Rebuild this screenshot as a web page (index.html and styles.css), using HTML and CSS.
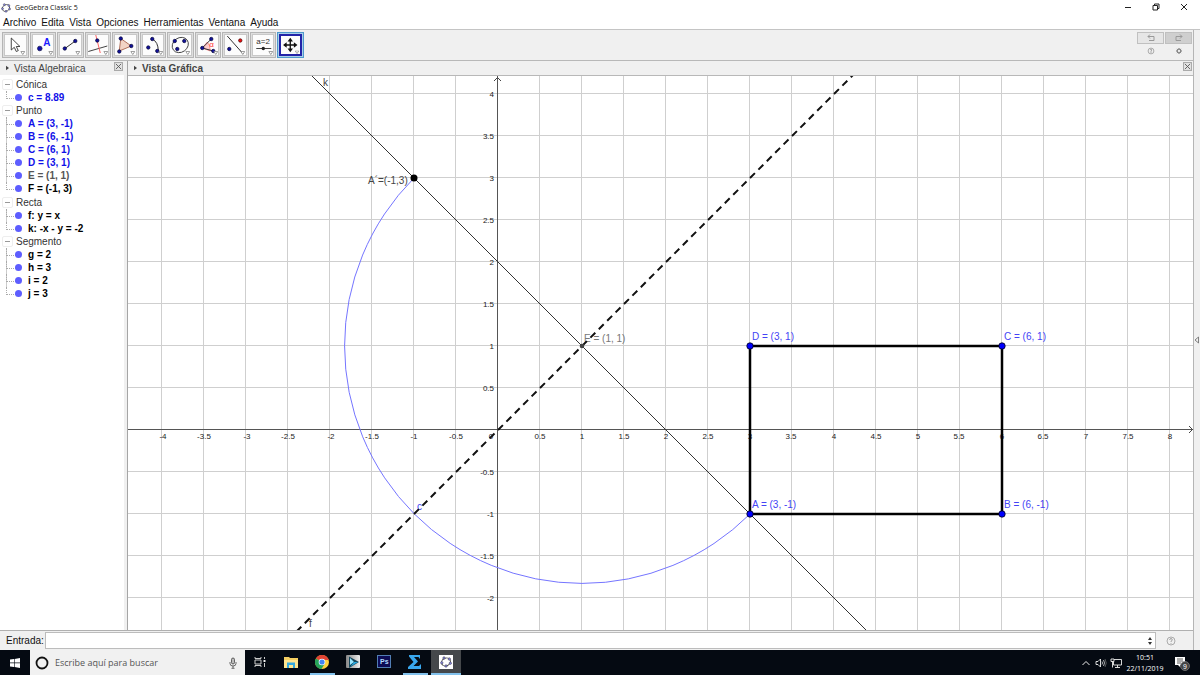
FILE: index.html
```html
<!DOCTYPE html>
<html lang="es">
<head>
<meta charset="utf-8">
<title>GeoGebra Classic 5</title>
<link rel="stylesheet" href="styles.css">
</head>
<body>
<svg class="defs" aria-hidden="true">
  <symbol id="logo" viewBox="0 0 12 12">
    <ellipse cx="6" cy="6" rx="4.6" ry="3.8" transform="rotate(-25 6 6)" fill="none" stroke="#555" stroke-width="1"/>
    <g fill="#8c8cee" stroke="#333" stroke-width=".5"><circle cx="4" cy="2" r="1.2"/><circle cx="9.3" cy="3" r="1.2"/><circle cx="10.3" cy="7.2" r="1.2"/><circle cx="6" cy="10" r="1.2"/><circle cx="1.8" cy="6.8" r="1.2"/></g>
  </symbol>
  <symbol id="more" viewBox="0 0 5 4"><path d="M.5.5h4l-2 3z" fill="#fff" stroke="#777" stroke-width=".7"/></symbol>
</svg>

<header class="titlebar">
  <svg class="app-logo" aria-hidden="true"><use href="#logo"/></svg>
  <span class="app-title">GeoGebra Classic 5</span>
  <div class="window-controls">
    <button aria-label="Minimizar"><svg viewBox="0 0 10 10"><path d="M2 5.500h6" stroke="#222"/></svg></button>
    <button aria-label="Restaurar"><svg viewBox="0 0 10 10"><path d="M2 3.500h4.500v4.500h-4.500zM3.500 3.500v-1.500h4.500v4.500h-1.500" fill="none" stroke="#222"/></svg></button>
    <button aria-label="Cerrar"><svg viewBox="0 0 10 10"><path d="M2 2l6 6M8 2l-6 6" stroke="#222"/></svg></button>
  </div>
</header>

<nav class="menubar">
  <button>Archivo</button><button>Edita</button><button>Vista</button><button>Opciones</button><button>Herramientas</button><button>Ventana</button><button>Ayuda</button>
</nav>

<div class="application">
  <div class="main">
    <div class="toolbar">
      <div class="tools">
        <button class="tool" aria-label="Elige y Mueve"><svg viewBox="0 0 20 20"><path d="M6 3v12l3-2.700 2 4.200 2-.9-2-4.100h3.700z" fill="#fff" stroke="#333" stroke-width=".9"/><use href="#more" x="15" y="16" width="5" height="4"/></svg></button>
        <button class="tool" aria-label="Punto"><svg viewBox="0 0 20 20"><circle cx="6.500" cy="13.500" r="2.300" fill="#11a" stroke="#114" stroke-width=".7"/><text x="10" y="11" font-size="10" font-weight="bold" fill="#1a1aff">A</text><use href="#more" x="15" y="16" width="5" height="4"/></svg></button>
        <button class="tool" aria-label="Recta"><svg viewBox="0 0 20 20"><path d="M4 14L15 6" stroke="#333"/><g class="dots"><circle cx="4.500" cy="13.500" r="1.700"/><circle cx="15" cy="6" r="1.700"/></g><use href="#more" x="15" y="16" width="5" height="4"/></svg></button>
        <button class="tool" aria-label="Perpendicular"><svg viewBox="0 0 20 20"><path d="M0 16.500L19 11" stroke="#444"/><path d="M7.500 0L12 18" stroke="#f66"/><circle class="dots" cx="9" cy="5.500" r="1.700"/><use href="#more" x="15" y="16" width="5" height="4"/></svg></button>
        <button class="tool" aria-label="Polígono"><svg viewBox="0 0 20 20"><path d="M5.500 3.500L16 11 4 16z" fill="#f2d4c5" stroke="#b0705a"/><g class="dots"><circle cx="5.500" cy="3.500" r="1.700"/><circle cx="16" cy="11" r="1.700"/><circle cx="4" cy="16.500" r="1.700"/></g><use href="#more" x="15" y="16" width="5" height="4"/></svg></button>
        <button class="tool" aria-label="Arco"><svg viewBox="0 0 20 20"><path d="M9 4q6 3 6 12" fill="none" stroke="#333"/><g class="dots"><circle cx="9" cy="4" r="1.700"/><circle cx="5" cy="12.500" r="1.700"/><circle cx="14" cy="16" r="1.700"/></g><use href="#more" x="15" y="16" width="5" height="4"/></svg></button>
        <button class="tool" aria-label="Elipse"><svg viewBox="0 0 20 20"><ellipse cx="10" cy="10" rx="8.500" ry="7.200" transform="rotate(-35 10 10)" fill="none" stroke="#444" stroke-width=".9"/><g class="dots"><circle cx="4.500" cy="6" r="1.700"/><circle cx="14" cy="6" r="1.700"/><circle cx="7" cy="14" r="1.700"/></g><use href="#more" x="15" y="16" width="5" height="4"/></svg></button>
        <button class="tool" aria-label="Ángulo"><svg viewBox="0 0 20 20"><path d="M4 13l5-6q3 3 3 9z" fill="#fcc" stroke="#f77" stroke-width=".7"/><path d="M13 4L4 13l11 3" fill="none" stroke="#333"/><text x="11" y="12" font-size="8" fill="#f33">α</text><g class="dots"><circle cx="13" cy="4" r="1.700"/><circle cx="4" cy="13" r="1.700"/><circle cx="15" cy="16" r="1.700"/></g><use href="#more" x="15" y="16" width="5" height="4"/></svg></button>
        <button class="tool" aria-label="Simetría"><svg viewBox="0 0 20 20"><path d="M2 1L18 19" stroke="#333"/><circle class="dots" cx="4" cy="14" r="1.700"/><circle cx="15" cy="5.500" r="1.700" fill="#e11" stroke="#400" stroke-width=".7"/><use href="#more" x="15" y="16" width="5" height="4"/></svg></button>
        <button class="tool" aria-label="Deslizador"><svg viewBox="0 0 20 20"><text x="3" y="9" font-size="8" fill="#333">a=2</text><path d="M3 13.500h15" stroke="#444"/><circle cx="10" cy="13.500" r="1.700" fill="#222"/><use href="#more" x="15" y="16" width="5" height="4"/></svg></button>
        <button class="tool selected" aria-label="Desplaza Vista Gráfica" aria-pressed="true"><svg viewBox="0 0 20 20"><path d="M10 5v10M5 10h10" stroke="#111" stroke-width="1.500"/><path d="M10 2l3 4H7zM10 18l3-4H7zM2 10l4-3v6zM18 10l-4-3v6z" fill="#111"/><use href="#more" x="15" y="16" width="5" height="4"/></svg></button>
      </div>
      <div class="side-tools">
        <button class="history" aria-label="Deshacer"><svg viewBox="0 0 12 10"><path d="M3 3.500h6v4H4M5 1.500l-2 2 2 2" fill="none" stroke="#999"/></svg></button>
        <button class="history redo" aria-label="Rehacer"><svg viewBox="0 0 12 10"><path d="M9 3.500H3v4h5M7 1.500l2 2-2 2" fill="none" stroke="#999"/></svg></button>
        <button aria-label="Ayuda"><svg viewBox="0 0 12 10"><circle cx="6" cy="5" r="2.900" fill="none" stroke="#999" stroke-width=".8"/><path d="M5 4q1-1.500 2 0L6 5v2" fill="none" stroke="#999" stroke-width=".8"/></svg></button>
        <button aria-label="Preferencias"><svg viewBox="0 0 12 10"><circle cx="6" cy="5" r="1.800" fill="none" stroke="#888" stroke-width="1.300"/><path d="M6 2v1.200M6 6.800V8M3 5h1.200M7.800 5H9M3.900 2.900l.9.900M7.200 6.200l.9.900M8.100 2.900l-.9.900M4.800 6.200l-.9.900" stroke="#888"/></svg></button>
      </div>
    </div>

    <div class="views">
      <section class="algebra">
        <div class="view-head"><svg class="expander" viewBox="0 0 4 6"><path d="M0 0l4 3-4 3z"/></svg><h2>Vista Algebraica</h2><button class="close" aria-label="Cerrar Vista Algebraica"><svg viewBox="0 0 8 8"><path d="M1 1l6 6M7 1L1 7" stroke="#555"/></svg></button></div>
        <ul class="tree">
          <li>Cónica
            <ul><li class="free">c = 8.89</li></ul></li>
          <li>Punto
            <ul><li class="free">A = (3, -1)</li><li class="free">B = (6, -1)</li><li class="free">C = (6, 1)</li><li class="free">D = (3, 1)</li><li class="dim">E = (1, 1)</li><li>F = (-1, 3)</li></ul></li>
          <li class="spaced">Recta
            <ul><li>f: y = x</li><li>k: -x - y = -2</li></ul></li>
          <li>Segmento
            <ul><li>g = 2</li><li>h = 3</li><li>i = 2</li><li>j = 3</li></ul></li>
        </ul>
      </section>

      <section class="graphics">
        <div class="view-head"><svg class="expander" viewBox="0 0 4 6"><path d="M0 0l4 3-4 3z"/></svg><h2>Vista Gráfica</h2><button class="close" aria-label="Cerrar Vista Gráfica"><svg viewBox="0 0 8 8"><path d="M1 1l6 6M7 1L1 7" stroke="#555"/></svg></button></div>
        <div class="canvas">
        <svg class="plot" role="img" aria-label="Rectángulo, rectas y arco en el plano">
          <defs><pattern id="grid" x="-1" y="-1" width="42" height="42" patternUnits="userSpaceOnUse"><path d="M0 0h42v1H1v41H0z" fill="#cfcfcf"/></pattern></defs>
          <!-- origin of the plane; one unit is 84px -->
          <g transform="translate(370 354)">
            <rect x="-2000" y="-2000" width="6000" height="4000" fill="url(#grid)"/>
            <path class="axis" d="M-2000-1h6000v1h-6000zM-1-2000h1v4000h-1z"/>
            <path d="M-4-349l3.500-3.500 3.500 3.500" fill="none" stroke="#444"/>
            <g class="ticks">
              <g class="x-ticks"><text x="-335" y="9">-4</text><text x="-294" y="9">-3.5</text><text x="-251" y="9">-3</text><text x="-210" y="9">-2.5</text><text x="-167" y="9">-2</text><text x="-126" y="9">-1.5</text><text x="-84" y="9">-1</text><text x="-42" y="9">-0.5</text><text x="-7" y="9">0</text><text x="42" y="9">0.5</text><text x="84" y="9">1</text><text x="126" y="9">1.5</text><text x="168" y="9">2</text><text x="210" y="9">2.5</text><text x="252" y="9">3</text><text x="293" y="9">3.5</text><text x="336" y="9">4</text><text x="378" y="9">4.5</text><text x="420" y="9">5</text><text x="461" y="9">5.5</text><text x="504" y="9">6</text><text x="545" y="9">6.5</text><text x="588" y="9">7</text><text x="630" y="9">7.5</text><text x="672" y="9">8</text></g>
              <g class="y-ticks"><text x="-4" y="-333">4</text><text x="-4" y="-291">3.5</text><text x="-4" y="-249">3</text><text x="-4" y="-207">2.5</text><text x="-4" y="-165">2</text><text x="-4" y="-123">1.5</text><text x="-4" y="-81">1</text><text x="-4" y="-39">0.5</text><text x="-4" y="45">-0.5</text><text x="-4" y="87">-1</text><text x="-4" y="129">-1.5</text><text x="-4" y="171">-2</text></g>
            </g>
            <g class="labels">
              <text x="-130" y="-246">A´=(-1,3)</text><text x="-175" y="-344">k</text><text x="-189" y="197">f</text><text x="86" y="-88" class="dim">E = (1, 1)</text>
              <g class="free"><text x="254" y="-90">D = (3, 1)</text><text x="506" y="-90">C = (6, 1)</text><text x="254" y="78">A = (3, -1)</text><text x="506" y="78">B = (6, -1)</text><text x="-81" y="80">c</text></g>
            </g>
            <path d="M-84-252A237.588 237.588 0 0 0 252 84" fill="none" stroke="#7575ff"/>
            <path d="M-840-1008L1008 840" stroke="#333"/>
            <path d="M-840 840L840-840" pathLength="2400" stroke="#111" stroke-width="2" stroke-dasharray="7 5"/>
            <rect x="252" y="-84" width="252" height="168" fill="none" stroke="#000" stroke-width="2.500"/>
            <circle cx="-84" cy="-252" r="3.500"/><circle cx="84" cy="-84" r="2.300" fill="#444"/>
            <g fill="#00f" stroke="#001" stroke-width=".8"><circle cx="252" cy="-84" r="3.200"/><circle cx="504" cy="-84" r="3.200"/><circle cx="252" cy="84" r="3.200"/><circle cx="504" cy="84" r="3.200"/></g>
          </g>
          <svg x="100%" overflow="visible"><path d="M-4 350l3.500 3.500-3.500 3.500" fill="none" stroke="#444"/></svg>
        </svg>
        </div>
      </section>
    </div>

    <form class="entry">
      <label for="entrada">Entrada:</label>
      <div class="entry-box"><input id="entrada" type="text"><svg viewBox="0 0 6 8"><path d="M3 0l2 3H1zM3 8l2-3H1z" fill="#333"/></svg></div>
      <button type="button" aria-label="Ayuda de Entrada"><svg viewBox="0 0 10 10"><circle cx="5" cy="5" r="4" fill="none" stroke="#999" stroke-width=".8"/><path d="M3.700 4q0-1.500 1.300-1.500T6.300 4Q5 5 5 6M5 7v.8" fill="none" stroke="#999" stroke-width=".9"/></svg></button>
    </form>
  </div>
  <aside class="edge"><button aria-label="Mostrar panel"><svg viewBox="0 0 5 8"><path d="M4.500 1L1 4l3.500 3z" fill="none" stroke="#666" stroke-width=".8"/></svg></button></aside>
</div>

<footer class="taskbar">
  <button class="start" aria-label="Inicio"><svg viewBox="0 0 12 12"><path d="M1 2.500L5 2v3.600H1zM5.600 1.900L11 1v4.600H5.600zM1 6.200h4V10l-4-.5zM5.600 6.200H11V11l-5.400-.9z" fill="#fff"/></svg></button>
  <label class="search"><svg class="cortana" viewBox="0 0 14 14"><circle cx="7" cy="7" r="5.500" fill="none" stroke="#111" stroke-width="1.800"/></svg><input type="text" placeholder="Escribe aquí para buscar" aria-label="Escribe aquí para buscar"><svg class="mic" viewBox="0 0 8 12"><rect x="2.500" y="1" width="3" height="6" rx="1.500" fill="#bbb" stroke="#444" stroke-width=".8"/><path d="M1 5v1.500Q1 9 4 9t3-2.500V5M4 9v2M2.500 11.300h3" fill="none" stroke="#444" stroke-width=".8"/></svg></label>
  <div class="apps">
    <button aria-label="Vista de tareas"><svg viewBox="0 0 14 14"><path d="M2 2v1.500h6V2M2 12v-1.500h6V12M2 5h6v4H2zM11.500 2v2M11.500 8v4" fill="none" stroke="#ccc"/><rect x="10.500" y="5" width="2" height="2" fill="#eee"/></svg></button>
    <button aria-label="Explorador"><svg viewBox="0 0 14 14"><path d="M0 2h5l1 1h8v10H0z" fill="#f5cf62"/><path d="M0 5h14v8H0z" fill="#ffe58f"/><path d="M3 13V7.500h8V13H9v-3H5v3z" fill="#35a9df"/></svg></button>
    <button class="running" aria-label="Chrome"><svg viewBox="0 0 14 14"><circle cx="7" cy="7" r="7" fill="#ffd23f"/><path d="M7 7L.9 3.500A7 7 0 0 1 13.100 3.500L14 5H7z" fill="#e14334"/><path d="M7 7L.9 3.500A7 7 0 0 0 6.500 14L9.500 9z" fill="#24a35a"/><circle cx="7" cy="7" r="3.300" fill="#fff"/><circle cx="7" cy="7" r="2.600" fill="#4285f4"/></svg></button>
    <button aria-label="Reproductor"><svg viewBox="0 0 14 14"><defs><linearGradient id="silver"><stop stop-color="#888"/><stop offset="1" stop-color="#eee"/></linearGradient></defs><rect width="14" height="13" rx="1" fill="url(#silver)"/><path d="M3 1.500l10 5.500-10 6z" fill="#154559"/><path d="M4 3l4 4-4 3z" fill="#9ae6ff"/><path d="M4.500 11.500L8 7h4z" fill="#27a9e0"/></svg></button>
    <button aria-label="Photoshop"><svg viewBox="0 0 14 14"><rect x=".5" y=".5" width="13" height="12" fill="#0c0c55" stroke="#527eb4"/><text x="3" y="9" font-size="7" font-weight="bold" fill="#b5dbff">Ps</text></svg></button>
    <button class="running" aria-label="Editor matemático"><svg viewBox="0 0 14 14"><path d="M1 0h11v4l-1.500-2H6l4 4.500L5.500 11H11l2-2v5H0v-2l5.500-5L1 1.500z" fill="#39a7ed"/></svg></button>
    <button class="running active" aria-label="GeoGebra"><svg viewBox="0 0 14 14"><rect width="14" height="14" fill="#fff"/><use href="#logo" x="1" y="1" width="12" height="12"/></svg></button>
  </div>
  <div class="tray">
    <button aria-label="Iconos ocultos"><svg viewBox="0 0 12 12"><path d="M2.500 8L6 4.500 9.500 8" fill="none" stroke="#eee"/></svg></button>
    <button aria-label="Volumen"><svg viewBox="0 0 12 12"><path d="M1 4.500h2l2.500-2.500v8L3 7.500H1z" fill="none" stroke="#eee" stroke-width=".9"/><path d="M7 4.500q1 1.500 0 3M8.500 3q2 3 0 6" fill="none" stroke="#ddd" stroke-width=".8"/><path d="M10 2q2.500 4 0 8" fill="none" stroke="#777" stroke-width=".7"/></svg></button>
    <button aria-label="Red"><svg viewBox="0 0 12 12"><path d="M4 2.500h7.500v5.500H3.500V5M5 10.500h5M7.500 8v2.500M1 2h3v2.500H1zM2.500 4.500v6" fill="none" stroke="#eee" stroke-width=".9"/></svg></button>
    <time class="clock" datetime="2019-11-22T10:51">10:51<br>22/11/2019</time>
    <button class="notices" aria-label="9 notificaciones"><svg viewBox="0 0 17 16"><path d="M1 2h10v8H6v2l-2-2H1z" fill="#fff"/><path d="M3 4h6M3 6h6M3 8h4" stroke="#333" stroke-width=".8"/><circle cx="11" cy="11" r="4.500" fill="#444" stroke="#888" stroke-width=".7"/><text x="9" y="14" font-size="7" fill="#fff">9</text></svg></button>
  </div>
</footer>
</body>
</html>
```

FILE: styles.css
```css
* { box-sizing: border-box; }
body {
  margin: 0;
  height: 100vh;
  display: flex;
  flex-direction: column;
  overflow: hidden;
  background: #fff;
  color: #111;
  font: 10px/13px "Liberation Sans", Arial, sans-serif;
}
button { padding: 0; border: 0; background: none; color: inherit; font: inherit; }
svg { display: block; }
h2 { margin: 0; font: inherit; }
ul { margin: 0; padding: 0; list-style: none; }
.defs { position: absolute; width: 0; height: 0; }

.titlebar { display: flex; align-items: center; flex: none; height: 15px; padding-left: 1px; }
.app-logo { width: 10px; height: 10px; margin-right: 4px; }
.app-title { font: 7px/13px "Open Sans", sans-serif; }
.window-controls { display: flex; gap: 18px; margin: 0 11px 2px auto; }
.window-controls svg { width: 10px; height: 10px; }

.menubar { display: flex; flex: none; gap: 5px; height: 14px; padding-left: 3px; }

.application { display: flex; flex: 1; min-height: 0; border-top: 1px solid #c4c4c4; background: #f0f0f0; }
.main { display: flex; flex: 1; flex-direction: column; min-width: 0; }
.edge { display: flex; align-items: center; width: 7px; border-left: 1px solid #b5b5b5; }
.edge svg { width: 5px; height: 8px; }

.toolbar { display: flex; flex: none; justify-content: space-between; height: 31px; padding: 2px 1px 2px 2px; border-bottom: 1px solid #b8b8b8; }
.tools { display: grid; grid-template-columns: repeat(11, 1fr); gap: 1px; width: 302px; }
.tool { padding: 2px; border: 1px solid #b5b5b5; background: #dedede; }
.tool svg { width: 100%; height: 20px; background: #fcfcfc; box-shadow: 0 0 0 1px #c8c8c8; }
.tool.selected { padding: 1px; border-color: #4f98cc; background: #a7cfea; }
.tool.selected svg { height: 22px; border: 2px solid #2323a8; box-shadow: none; }
.dots { fill: #11119c; stroke: #003; stroke-width: .7px; }
.side-tools { display: grid; grid-template-columns: 27px 27px; grid-template-rows: 12px 12px; gap: 1px; }
.side-tools button { display: flex; align-items: center; justify-content: center; }
.side-tools svg { width: 12px; height: 10px; }
.side-tools .history { border: 1px solid #c0c0c0; background: #e6e6e6; }
.side-tools .redo { background: #cfcfcf; }

.views { display: flex; flex: 1; min-height: 0; }
.view-head { display: flex; align-items: center; flex: none; height: 14px; padding: 0 1px 0 6px; color: #444; }
.expander { width: 3px; height: 6px; margin-right: 5px; fill: #444; }
.close { width: 9px; height: 9px; margin: 0 0 3px auto; border: 1px solid #aaa; background: #e2e2e2; }
.close svg { width: 7px; height: 7px; }
.algebra { display: flex; flex: none; flex-direction: column; width: 128px; padding-right: 3px; border-right: 1px solid #a5a5a5; }
.tree { flex: 1; padding: 3px 0 0 6px; background: #fff; }
.tree > li { position: relative; padding-left: 10px; color: #333; }
.tree > .spaced { margin-top: 1px; }
.tree > li::before { content: ""; position: absolute; left: -4px; top: 1px; width: 9px; height: 9px; border: 1px solid #eee; border-radius: 2px; background: linear-gradient(#999, #999) center / 5px 1px no-repeat #fff; }
.tree ul { margin-left: -10px; }
.tree ul li { position: relative; padding-left: 22px; color: #000; font-weight: bold; }
.tree ul li::before { content: ""; position: absolute; left: 0; top: 0; width: 9px; height: 7px; border-bottom: 1px dotted #aaa; border-left: 1px dotted #aaa; }
.tree ul li:not(:last-child) { background: linear-gradient(#ccc, #ccc) left / 1px 100% no-repeat; }
.tree ul li::after { content: ""; position: absolute; left: 9px; top: 3px; width: 7px; height: 7px; border-radius: 50%; background: #5d5dff; }
.tree ul .free { color: #1111e8; }
.tree ul .dim { color: #555; }

.graphics { display: flex; flex: 1; flex-direction: column; min-width: 0; }
.graphics h2 { font-weight: bold; }
.canvas { flex: 1; min-height: 0; border-top: 1px solid #b8b8b8; background: #fff; }
.plot { width: 100%; height: 100%; overflow: hidden; }
.axis { fill: #555; }
.ticks { fill: #222; font-size: 8px; }
.x-ticks { text-anchor: middle; }
.y-ticks { text-anchor: end; }
.labels { fill: #444; font-size: 10px; }
.labels .free { fill: #4444f5; }
.labels .dim { fill: #777; }

.entry { display: flex; flex: none; align-items: center; height: 20px; padding: 1px 17px 1px 6px; border-top: 1px solid #b0b0b0; }
.entry label { margin-right: 1px; }
.entry-box { display: flex; flex: 1; align-items: center; height: 17px; margin-right: 10px; padding-right: 2px; border: 1px solid #bcbcbc; background: #fff; }
.entry-box input { flex: 1; min-width: 0; padding: 0; border: 0; font: inherit; outline: 0; }
.entry-box svg { width: 6px; height: 8px; }
.entry > button svg { width: 10px; height: 10px; }

.taskbar { display: flex; flex: none; height: 25px; background: #050a12; color: #fff; }
.taskbar button { display: flex; align-items: center; justify-content: center; }
.start { width: 30px; }
.start svg { width: 12px; height: 12px; }
.search { display: flex; align-items: center; width: 215px; padding: 0 8px 0 5px; background: #f1f1f1; }
.cortana { width: 14px; height: 14px; }
.search input { flex: 1; min-width: 0; padding: 0 0 0 6px; border: 0; background: none; color: #333; font: 9px/13px "Open Sans", sans-serif; outline: 0; }
.search input::placeholder { color: #555; opacity: 1; }
.mic { width: 8px; height: 12px; }
.apps { display: flex; gap: 1px; }
.apps button { width: 30px; border-bottom: 2px solid transparent; }
.apps svg { width: 14px; height: 14px; }
.apps .running { background: linear-gradient(#82c1ec, #82c1ec) center bottom / 25px 2px no-repeat border-box; }
.apps .active { border-color: #82c1ec; background: #45484b; }
.tray { display: flex; align-items: center; margin-left: auto; padding-right: 3px; }
.tray > button { width: 15px; }
.tray svg { width: 12px; height: 12px; }
.clock { width: 44px; font: 7px/11px "Open Sans", sans-serif; text-align: center; }
.tray .notices { width: 30px; }
.notices svg { width: 17px; height: 16px; }
```
